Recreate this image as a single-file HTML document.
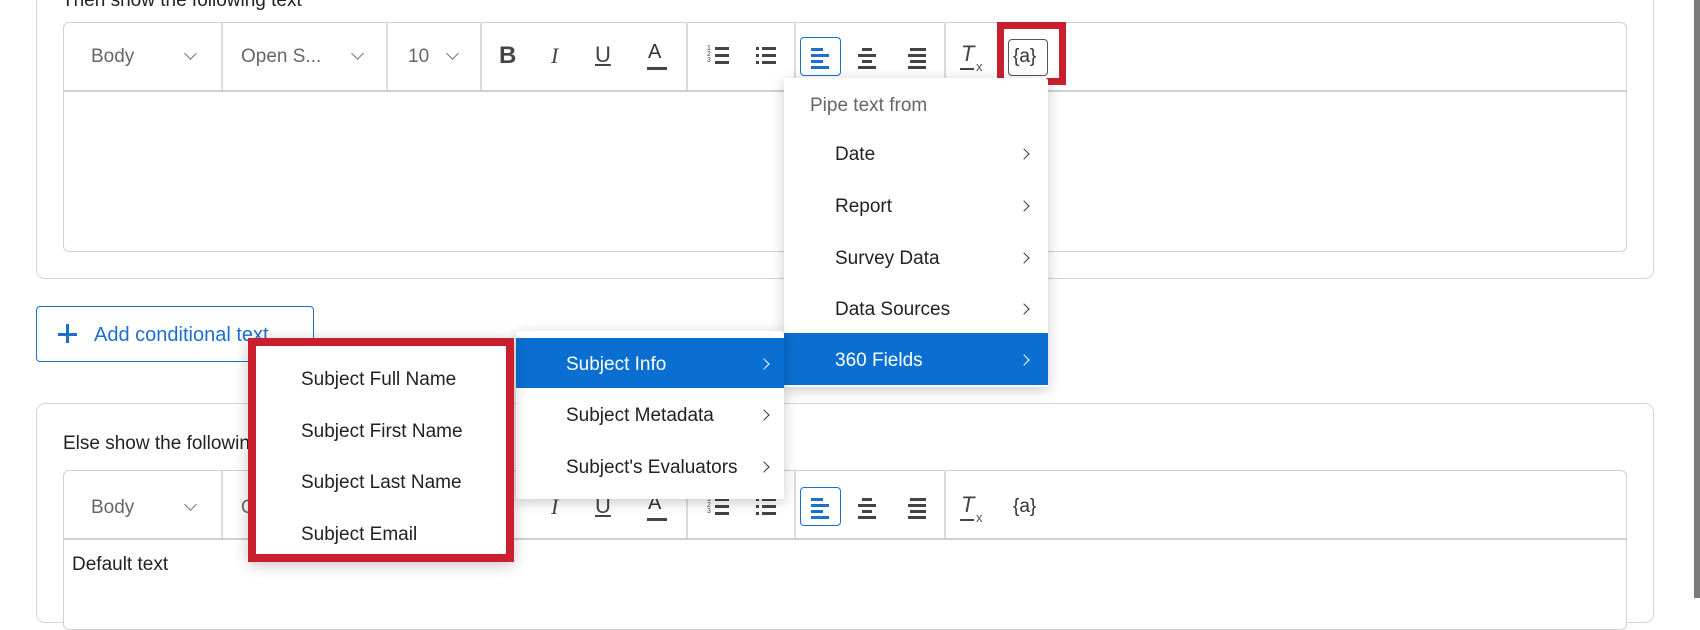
<!DOCTYPE html>
<html><head><meta charset="utf-8"><style>
*{box-sizing:border-box;margin:0;padding:0}
body{width:1700px;height:598px;overflow:hidden;background:#fff;position:relative;font-family:"Liberation Sans",sans-serif;color:#222}
.a{position:absolute}
.card{position:absolute;border:1.5px solid #d6d6d6;border-radius:9px;background:#fff}
.ed{position:absolute;border:1.5px solid #d0d0d0;border-radius:6px;background:#fff}
.sep{position:absolute;top:0;width:1.5px;background:#dcdcdc}
.t{position:absolute;font-size:19px;white-space:nowrap;line-height:1}
.g{color:#666}
.chev{position:absolute;width:9px;height:9px;border-right:1.6px solid #777;border-bottom:1.6px solid #777;transform:rotate(45deg)}
.rc{position:absolute;width:8px;height:8px;border-right:1.6px solid #333;border-bottom:1.6px solid #333;transform:rotate(-45deg)}
.menu{position:absolute;background:#fff;box-shadow:0 3px 14px rgba(0,0,0,.22);border-radius:3px}
.hl{position:absolute;background:#0b6ed1;left:0;right:0}
.bar{position:absolute;height:3px;background:#444}
</style></head><body>
<div class="card" style="left:36px;top:-10px;width:1618px;height:289px"></div>
<div class="t" style="left:62px;top:-9px;font-size:19px">Then show the following text</div>
<div class="ed" style="left:63px;top:22px;width:1564px;height:230px"></div>
<div class="a" style="left:63px;top:90px;width:1564px;height:1.5px;background:#d0d0d0"></div>

<!-- toolbar 1 -->
<div class="a" style="left:0;top:22px;width:1700px;height:68px">
 <div class="t g" style="left:91px;top:25px">Body</div><div class="chev" style="left:186px;top:27px"></div>
 <div class="sep" style="left:221px;height:68px"></div>
 <div class="t g" style="left:241px;top:25px">Open S...</div><div class="chev" style="left:353px;top:27px"></div>
 <div class="sep" style="left:386px;height:68px"></div>
 <div class="t g" style="left:408px;top:25px">10</div><div class="chev" style="left:448px;top:27px"></div>
 <div class="sep" style="left:480px;height:68px"></div>
 <div class="t" style="left:499px;top:22px;font-weight:bold;font-size:24px;color:#444">B</div>
 <div class="t" style="left:551px;top:23px;font-style:italic;font-size:22px;color:#444;font-family:'Liberation Serif',serif">I</div>
 <div class="t" style="left:595px;top:22px;font-size:22px;color:#444;text-decoration:underline">U</div>
 <div class="t" style="left:648px;top:20px;font-size:20px;color:#333">A</div><div class="bar" style="left:647px;top:45px;width:20px"></div>
 <div class="sep" style="left:686px;height:68px"></div>
 <div class="a" style="left:707px;top:24px;font-size:7px;line-height:6px;color:#444">1<br>2<br>3</div>
 <div class="bar" style="left:715px;top:25px;width:14px"></div><div class="bar" style="left:715px;top:32px;width:14px"></div><div class="bar" style="left:715px;top:39px;width:14px"></div>
 <div class="bar" style="left:756px;top:25px;width:3px"></div><div class="bar" style="left:762px;top:25px;width:14px"></div>
 <div class="bar" style="left:756px;top:32px;width:3px"></div><div class="bar" style="left:762px;top:32px;width:14px"></div>
 <div class="bar" style="left:756px;top:39px;width:3px"></div><div class="bar" style="left:762px;top:39px;width:14px"></div>
 <div class="sep" style="left:794px;height:68px"></div>
 <div class="a" style="left:800px;top:15px;width:41px;height:39px;border:1.5px solid #1a6fd0;border-radius:4px"></div>
 <div class="bar" style="left:811px;top:26px;width:12px;background:#1a6fd0"></div><div class="bar" style="left:811px;top:32px;width:18px;background:#1a6fd0"></div><div class="bar" style="left:811px;top:38px;width:12px;background:#1a6fd0"></div><div class="bar" style="left:811px;top:44px;width:18px;background:#1a6fd0"></div>
 <div class="bar" style="left:862px;top:26px;width:10px"></div><div class="bar" style="left:858px;top:32px;width:18px"></div><div class="bar" style="left:862px;top:38px;width:10px"></div><div class="bar" style="left:858px;top:44px;width:18px"></div>
 <div class="bar" style="left:910px;top:26px;width:16px"></div><div class="bar" style="left:908px;top:32px;width:18px"></div><div class="bar" style="left:910px;top:38px;width:16px"></div><div class="bar" style="left:908px;top:44px;width:18px"></div>
 <div class="sep" style="left:944px;height:68px"></div>
 <div class="t" style="left:961px;top:21px;font-size:22px;font-style:italic;color:#444">T</div><div class="bar" style="left:960px;top:46px;width:14px;height:2px"></div><div class="t" style="left:976px;top:38px;font-size:13px;color:#555">x</div>
</div>
<div class="a" style="left:997px;top:22px;width:69px;height:63px;border:7px solid #c8202f"></div>
<div class="a" style="left:1008px;top:39px;width:40px;height:37px;border:1.5px solid #555;border-radius:4px"></div>
<div class="t" style="left:1013px;top:47px;font-size:19px;color:#333">{a}</div>

<!-- add conditional -->
<div class="a" style="left:36px;top:306px;width:278px;height:56px;border:1.5px solid #1a6fd0;border-radius:4px"></div>
<div class="a" style="left:58px;top:333px;width:19px;height:2.5px;background:#1a6fd0"></div><div class="a" style="left:66px;top:324px;width:2.5px;height:19px;background:#1a6fd0"></div>
<div class="t" style="left:94px;top:325px;color:#1a6fd0;font-size:20px">Add conditional text</div>

<!-- card 2 -->
<div class="card" style="left:36px;top:403px;width:1618px;height:220px"></div>
<div class="t" style="left:63px;top:434px;font-size:19px">Else show the following text</div>
<div class="ed" style="left:63px;top:470px;width:1564px;height:160px"></div>
<div class="a" style="left:63px;top:538px;width:1564px;height:1.5px;background:#d0d0d0"></div>
<div class="a" style="left:0;top:470px;width:1700px;height:68px">
 <div class="t g" style="left:91px;top:28px">Body</div><div class="chev" style="left:186px;top:30px"></div>
 <div class="sep" style="left:221px;height:68px"></div>
 <div class="t g" style="left:241px;top:28px">Open S...</div>
 <div class="sep" style="left:686px;height:68px"></div>
 <div class="t" style="left:551px;top:26px;font-style:italic;font-size:22px;color:#444;font-family:'Liberation Serif',serif">I</div>
 <div class="t" style="left:595px;top:25px;font-size:22px;color:#444;text-decoration:underline">U</div>
 <div class="t" style="left:648px;top:23px;font-size:20px;color:#333">A</div><div class="bar" style="left:647px;top:48px;width:20px"></div>
 <div class="a" style="left:707px;top:27px;font-size:7px;line-height:6px;color:#444">1<br>2<br>3</div>
 <div class="bar" style="left:715px;top:28px;width:14px"></div><div class="bar" style="left:715px;top:35px;width:14px"></div><div class="bar" style="left:715px;top:42px;width:14px"></div>
 <div class="bar" style="left:756px;top:28px;width:3px"></div><div class="bar" style="left:762px;top:28px;width:14px"></div>
 <div class="bar" style="left:756px;top:35px;width:3px"></div><div class="bar" style="left:762px;top:35px;width:14px"></div>
 <div class="bar" style="left:756px;top:42px;width:3px"></div><div class="bar" style="left:762px;top:42px;width:14px"></div>
 <div class="sep" style="left:794px;height:68px"></div>
 <div class="a" style="left:800px;top:17px;width:41px;height:39px;border:1.5px solid #1a6fd0;border-radius:4px"></div>
 <div class="bar" style="left:811px;top:28px;width:12px;background:#1a6fd0"></div><div class="bar" style="left:811px;top:34px;width:18px;background:#1a6fd0"></div><div class="bar" style="left:811px;top:40px;width:12px;background:#1a6fd0"></div><div class="bar" style="left:811px;top:46px;width:18px;background:#1a6fd0"></div>
 <div class="bar" style="left:862px;top:28px;width:10px"></div><div class="bar" style="left:858px;top:34px;width:18px"></div><div class="bar" style="left:862px;top:40px;width:10px"></div><div class="bar" style="left:858px;top:46px;width:18px"></div>
 <div class="bar" style="left:910px;top:28px;width:16px"></div><div class="bar" style="left:908px;top:34px;width:18px"></div><div class="bar" style="left:910px;top:40px;width:16px"></div><div class="bar" style="left:908px;top:46px;width:18px"></div>
 <div class="sep" style="left:944px;height:68px"></div>
 <div class="t" style="left:961px;top:24px;font-size:22px;font-style:italic;color:#444">T</div><div class="bar" style="left:960px;top:49px;width:14px;height:2px"></div><div class="t" style="left:976px;top:41px;font-size:13px;color:#555">x</div>
 <div class="t" style="left:1013px;top:27px;font-size:19px;color:#333">{a}</div>
</div>
<div class="t" style="left:72px;top:555px;font-size:19px">Default text</div>

<!-- right strip -->
<div class="a" style="left:1694px;top:0;width:6px;height:598px;background:#7a7a7a"></div>

<!-- menu 1 -->
<div class="menu" style="left:784px;top:78px;width:264px;height:309px">
 <div class="t g" style="left:26px;top:18px">Pipe text from</div>
 <div class="t" style="left:51px;top:67px">Date</div><div class="rc" style="left:236px;top:72px"></div>
 <div class="t" style="left:51px;top:119px">Report</div><div class="rc" style="left:236px;top:124px"></div>
 <div class="t" style="left:51px;top:171px">Survey Data</div><div class="rc" style="left:236px;top:176px"></div>
 <div class="t" style="left:51px;top:222px">Data Sources</div><div class="rc" style="left:236px;top:227px"></div>
 <div class="hl" style="top:255px;height:52px"></div>
 <div class="t" style="left:51px;top:273px;color:#fff">360 Fields</div><div class="rc" style="left:236px;top:278px;border-color:#fff"></div>
</div>
<!-- menu 2 -->
<div class="menu" style="left:516px;top:331px;width:268px;height:168px">
 <div class="hl" style="top:7px;height:50px"></div>
 <div class="t" style="left:50px;top:24px;color:#fff">Subject Info</div><div class="rc" style="left:244px;top:29px;border-color:#fff"></div>
 <div class="t" style="left:50px;top:75px">Subject Metadata</div><div class="rc" style="left:244px;top:80px"></div>
 <div class="t" style="left:50px;top:127px">Subject's Evaluators</div><div class="rc" style="left:244px;top:132px"></div>
</div>
<!-- menu 3 -->
<div class="menu" style="left:248px;top:338px;width:266px;height:224px;border:8px solid #c8202f;border-radius:0">
 <div class="t" style="left:45px;top:24px">Subject Full Name</div>
 <div class="t" style="left:45px;top:76px">Subject First Name</div>
 <div class="t" style="left:45px;top:127px">Subject Last Name</div>
 <div class="t" style="left:45px;top:179px">Subject Email</div>
</div>
</body></html>
